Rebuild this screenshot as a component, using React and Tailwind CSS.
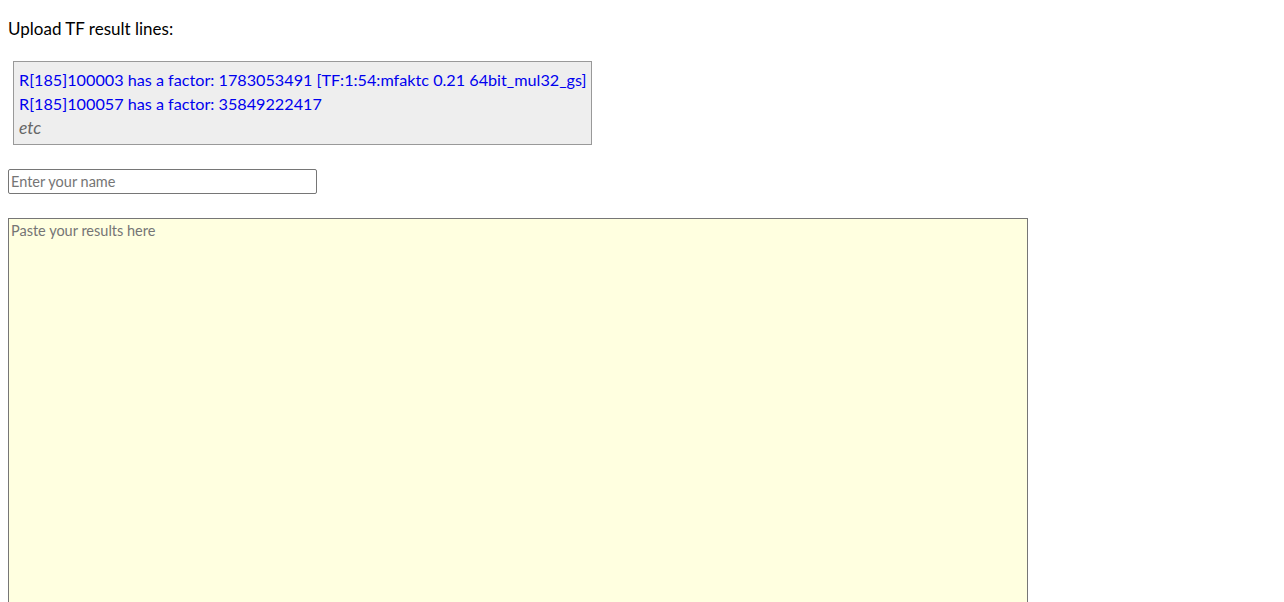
import React from 'react';

const App = () => {
  return (
    <div className="min-h-screen bg-white text-black p-2 font-['Lato','Liberation_Sans',sans-serif] text-[17px] leading-6">
      {/* Heading */}
      <p className="mt-[9px] mb-[20px]">Upload TF result lines:</p>

      {/* Example block */}
      <div className="ml-[5px] inline-block bg-[#eeeeee] border border-[#999999] px-[5px] pt-[6px] pb-[4px] text-[16.2px] text-[#0000ee]">
        <div>R[185]100003 has a factor: 1783053491 [TF:1:54:mfaktc 0.21 64bit_mul32_gs]</div>
        <div>R[185]100057 has a factor: 35849222417</div>
        <div className="italic text-[17.5px] text-[#666666]">etc</div>
      </div>

      {/* Name */}
      <div className="mt-[24px]">
        <input
          type="text"
          placeholder="Enter your name"
          className="w-[309px] h-[25px] border border-[#767676] rounded-[2px] px-[2px] text-[14.5px] placeholder:text-[#757575] outline-none"
        />
      </div>

      {/* Results */}
      <div className="mt-[24px]">
        <textarea
          placeholder="Paste your results here"
          className="block w-[1020px] h-[500px] bg-[#ffffe0] border border-[#767676] px-[2px] py-0 text-[14.5px] placeholder:text-[#757575] outline-none resize-none"
        />
      </div>
    </div>
  );
};

export default App;
